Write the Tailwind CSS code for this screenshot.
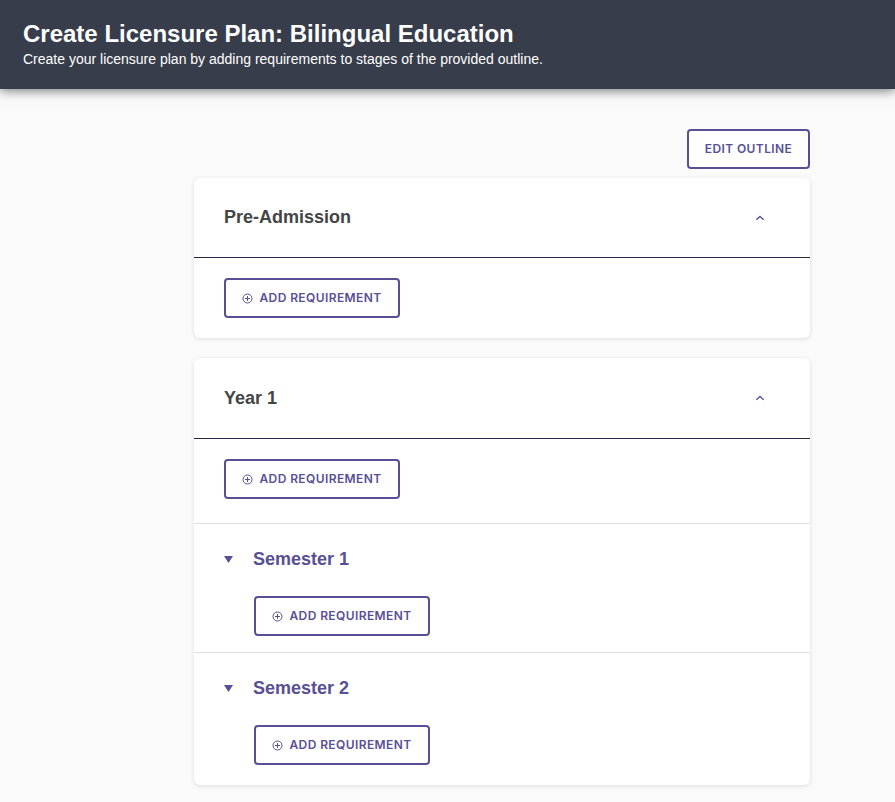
<!DOCTYPE html>
<html lang="en">
<head>
    <meta charset="UTF-8">
    <title>Create Licensure Plan</title>
    <script src="https://cdn.jsdelivr.net/npm/@tailwindcss/browser@4"></script>
</head>
<body class="bg-[#fafafa] font-['Liberation_Sans',Arial,sans-serif] h-[802px] overflow-hidden">

    <!-- Header -->
    <header class="bg-[#373d4b] text-white h-[89px] pl-[23px] pt-[19px] shadow-[0_2px_10px_rgba(0,0,0,0.5)] relative">
        <h1 class="text-[24px] leading-[30px] font-bold">Create Licensure Plan: Bilingual Education</h1>
        <p class="text-[14px] leading-[18px] mt-[1px]">Create your licensure plan by adding requirements to stages of the provided outline.</p>
    </header>

    <main class="w-[616px] ml-[194px] pt-[40px]">
        <div class="flex justify-end mb-[9px]">
            <button class="h-[40px] w-[123px] bg-white border-2 border-[#584f96] rounded-[4px] text-[#584f96] font-['Inter',sans-serif] font-semibold text-[12px] tracking-[0.4px]">EDIT OUTLINE</button>
        </div>

        <!-- Pre-Admission -->
        <section class="bg-white rounded-[6px] shadow-[0_1px_4px_rgba(0,0,0,0.12)] mb-[20px]">
            <div class="h-[80px] pl-[30px] pr-[44px] flex items-center justify-between border-b border-[#2f2547]">
                <h2 class="text-[18px] font-bold text-[#454545]">Pre-Admission</h2>
                <svg class="w-[12px] h-[12px]" viewBox="0 0 12 12" fill="none" stroke="#584f96" stroke-width="1.3"><path d="M2.3 7.8 6 4.4 9.7 7.8"/></svg>
            </div>
            <div class="h-[80px] pl-[30px] pt-[20px]">
                <button class="h-[40px] w-[176px] bg-white border-2 border-[#584f96] rounded-[4px] text-[#584f96] font-['Inter',sans-serif] font-semibold text-[12px] tracking-[0.4px] flex items-center justify-center gap-[6px]">
                    <svg class="w-[11px] h-[11px]" viewBox="0 0 11 11" fill="none" stroke="#584f96" stroke-width="1"><circle cx="5.5" cy="5.5" r="4.5"/><path d="M5.5 3v5M3 5.5h5"/></svg>
                    ADD REQUIREMENT
                </button>
            </div>
        </section>

        <!-- Year 1 -->
        <section class="bg-white rounded-[6px] shadow-[0_1px_4px_rgba(0,0,0,0.12)]">
            <div class="h-[81px] pl-[30px] pr-[44px] flex items-center justify-between border-b border-[#2f2547]">
                <h2 class="text-[18px] font-bold text-[#454545]">Year 1</h2>
                <svg class="w-[12px] h-[12px]" viewBox="0 0 12 12" fill="none" stroke="#584f96" stroke-width="1.3"><path d="M2.3 7.8 6 4.4 9.7 7.8"/></svg>
            </div>
            <div class="h-[85px] pl-[30px] pt-[20px] border-b border-[#e0e0e0]">
                <button class="h-[40px] w-[176px] bg-white border-2 border-[#584f96] rounded-[4px] text-[#584f96] font-['Inter',sans-serif] font-semibold text-[12px] tracking-[0.4px] flex items-center justify-center gap-[6px]">
                    <svg class="w-[11px] h-[11px]" viewBox="0 0 11 11" fill="none" stroke="#584f96" stroke-width="1"><circle cx="5.5" cy="5.5" r="4.5"/><path d="M5.5 3v5M3 5.5h5"/></svg>
                    ADD REQUIREMENT
                </button>
            </div>
            <div class="h-[129px] pl-[30px] border-b border-[#e0e0e0]">
                <div class="h-[72px] flex items-center gap-[20px] pb-[2px]">
                    <svg class="w-[9px] h-[7px]" viewBox="0 0 9 7" fill="#584f96"><path d="M0 0h9L4.5 7z"/></svg>
                    <h3 class="text-[18px] font-bold text-[#584f96]">Semester 1</h3>
                </div>
                <button class="ml-[30px] h-[40px] w-[176px] bg-white border-2 border-[#584f96] rounded-[4px] text-[#584f96] font-['Inter',sans-serif] font-semibold text-[12px] tracking-[0.4px] flex items-center justify-center gap-[6px]">
                    <svg class="w-[11px] h-[11px]" viewBox="0 0 11 11" fill="none" stroke="#584f96" stroke-width="1"><circle cx="5.5" cy="5.5" r="4.5"/><path d="M5.5 3v5M3 5.5h5"/></svg>
                    ADD REQUIREMENT
                </button>
            </div>
            <div class="h-[132px] pl-[30px]">
                <div class="h-[72px] flex items-center gap-[20px] pb-[2px]">
                    <svg class="w-[9px] h-[7px]" viewBox="0 0 9 7" fill="#584f96"><path d="M0 0h9L4.5 7z"/></svg>
                    <h3 class="text-[18px] font-bold text-[#584f96]">Semester 2</h3>
                </div>
                <button class="ml-[30px] h-[40px] w-[176px] bg-white border-2 border-[#584f96] rounded-[4px] text-[#584f96] font-['Inter',sans-serif] font-semibold text-[12px] tracking-[0.4px] flex items-center justify-center gap-[6px]">
                    <svg class="w-[11px] h-[11px]" viewBox="0 0 11 11" fill="none" stroke="#584f96" stroke-width="1"><circle cx="5.5" cy="5.5" r="4.5"/><path d="M5.5 3v5M3 5.5h5"/></svg>
                    ADD REQUIREMENT
                </button>
            </div>
        </section>
    </main>

</body>
</html>
